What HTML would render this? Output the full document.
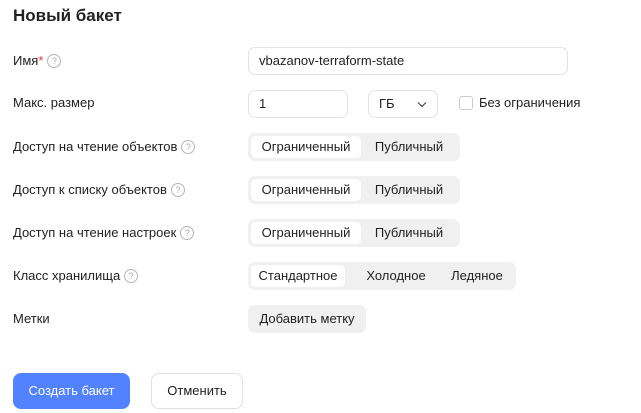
<!DOCTYPE html>
<html><head><meta charset="utf-8"><style>
body{margin:0;width:641px;height:413px;background:#fff;font-family:"Liberation Sans",sans-serif;color:#222;font-size:13px;position:relative;overflow:hidden}
.a{position:absolute}
.lbl{position:absolute;left:13px;line-height:16px;white-space:nowrap;display:flex;align-items:center}
.q{display:inline-block;width:12px;height:12px;border:1px solid #b5b5b5;border-radius:50%;color:#aaa;font-size:9px;line-height:12px;text-align:center;margin-left:4px}
.inp{position:absolute;border:1px solid #e2e2e2;border-radius:7px;box-sizing:border-box;height:28px;line-height:26px;padding-left:10px;font-size:13px}
.seg{position:absolute;left:248px;height:28px;background:#f0f0f0;border-radius:7px}
.seg span{position:absolute;top:3px;height:22px;line-height:22px;text-align:center;font-size:13px}
.seg .on{background:#fff;border-radius:5px}
.btn{position:absolute;border-radius:8px;box-sizing:border-box;text-align:center;font-size:13px}
</style></head><body>
<div class="a" style="left:13px;top:6px;font-size:17px;font-weight:bold;color:#222">Новый бакет</div>

<div class="lbl" style="top:53px">Имя<span style="color:#e33">*</span><span class="q">?</span></div>
<div class="inp" style="left:248px;top:47px;width:320px">vbazanov-terraform-state</div>

<div class="lbl" style="top:95px">Макс. размер</div>
<div class="inp" style="left:248px;top:90px;width:100px">1</div>
<div class="inp" style="left:368px;top:90px;width:70px">ГБ<svg class="a" style="left:48px;top:10px" width="10" height="7" viewBox="0 0 10 7"><path d="M1 1.5L5 5.5L9 1.5" fill="none" stroke="#333" stroke-width="1"/></svg></div>
<div class="a" style="left:459px;top:96px;width:12px;height:12px;border:1px solid #ccc;border-radius:3px"></div>
<div class="a" style="left:479px;top:95px">Без ограничения</div>

<div class="lbl" style="top:139px">Доступ на чтение объектов<span class="q">?</span></div>
<div class="seg" style="top:133px;width:212px"><span class="on" style="left:3px;width:110px">Ограниченный</span><span style="left:113px;width:96px">Публичный</span></div>

<div class="lbl" style="top:182px">Доступ к списку объектов<span class="q">?</span></div>
<div class="seg" style="top:176px;width:212px"><span class="on" style="left:3px;width:110px">Ограниченный</span><span style="left:113px;width:96px">Публичный</span></div>

<div class="lbl" style="top:225px">Доступ на чтение настроек<span class="q">?</span></div>
<div class="seg" style="top:219px;width:212px"><span class="on" style="left:3px;width:110px">Ограниченный</span><span style="left:113px;width:96px">Публичный</span></div>

<div class="lbl" style="top:268px">Класс хранилища<span class="q">?</span></div>
<div class="seg" style="top:262px;width:268px"><span class="on" style="left:3px;width:94px">Стандартное</span><span style="left:100px;width:96px">Холодное</span><span style="left:193px;width:72px">Ледяное</span></div>

<div class="lbl" style="top:311px">Метки</div>
<div class="btn" style="left:248px;top:305px;width:118px;height:28px;line-height:28px;background:#f0f0f0;border-radius:7px">Добавить метку</div>

<div class="btn" style="left:13px;top:373px;width:117px;height:36px;line-height:36px;background:#5282ff;color:#fff">Создать бакет</div>
<div class="btn" style="left:151px;top:373px;width:92px;height:36px;line-height:34px;border:1px solid #e0e0e0">Отменить</div>
</body></html>
